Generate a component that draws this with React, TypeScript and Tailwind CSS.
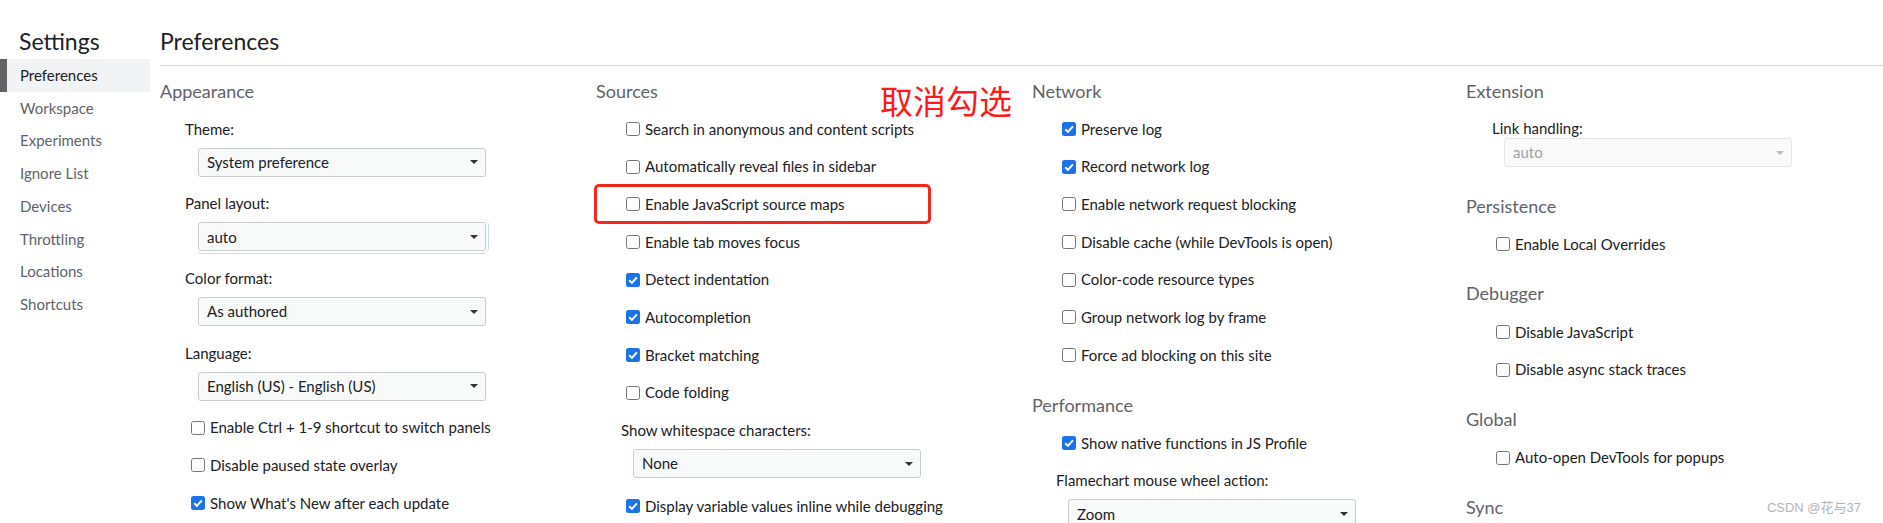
import React from "react";

const FONT = "font-['Segoe_UI',Lato,'Noto_Sans',sans-serif]";

const Box = ({ checked }: { checked?: boolean }) =>
  checked ? (
    <span className="w-[14px] h-[14px] rounded-[2.5px] bg-[#1a73e8] flex items-center justify-center shrink-0">
      <svg width="14" height="14" viewBox="0 0 14 14">
        <path d="M3.2 7.3 L5.9 9.9 L10.9 4.3" fill="none" stroke="#fff" strokeWidth="2" />
      </svg>
    </span>
  ) : (
    <span className="w-[14px] h-[14px] rounded-[2.5px] border border-[#767676] bg-white shrink-0" />
  );

const Row = ({
  label,
  checked,
  pad = "pl-[30px]",
  extra = "",
  children,
}: {
  label: string;
  checked?: boolean;
  pad?: string;
  extra?: string;
  children?: React.ReactNode;
}) => (
  <div className={`relative h-[37.7px] shrink-0 flex items-center gap-[5px] ${pad} ${extra}`}>
    <Box checked={checked} />
    <span className="text-[15px] text-[#202124] whitespace-nowrap">{label}</span>
    {children}
  </div>
);

const Header = ({ text, extra = "" }: { text: string; extra?: string }) => (
  <div className={`h-[38px] shrink-0 flex items-center text-[18px] text-[#5f6368] ${extra}`}>{text}</div>
);

const Label = ({ text, pad = "pl-[25px]", extra = "" }: { text: string; pad?: string; extra?: string }) => (
  <div className={`h-[37.7px] shrink-0 flex items-center text-[15px] text-[#202124] whitespace-nowrap ${pad} ${extra}`}>
    {text}
  </div>
);

const Select = ({
  value,
  indent = "ml-[37px]",
  disabled,
  focused,
}: {
  value: string;
  indent?: string;
  disabled?: boolean;
  focused?: boolean;
}) => (
  <div
    className={`h-[29px] w-[288px] shrink-0 ${indent} rounded-[3px] border flex items-center justify-between pl-[8px] pr-[7px] text-[15px] ${
      disabled
        ? "border-[#e3e5e8] bg-[#fafafa] text-[#a0a4a8]"
        : "border-[#c9cccf] bg-[#f8f9f9] text-[#202124]"
    } ${
      focused
        ? "shadow-[2px_0_0_0_#fff,0_2px_0_0_#fff,3px_0_0_0_#c4dbf8,0_3px_0_0_#c4dbf8]"
        : ""
    }`}
  >
    <span>{value}</span>
    <svg width="8" height="4" viewBox="0 0 8 4">
      <path d="M0 0 H8 L4 4 Z" fill={disabled ? "#b8bbbf" : "#333"} />
    </svg>
  </div>
);

const sideItems = [
  "Preferences",
  "Workspace",
  "Experiments",
  "Ignore List",
  "Devices",
  "Throttling",
  "Locations",
  "Shortcuts",
];

export default function App() {
  return (
    <div className={`relative w-[1883px] h-[523px] overflow-hidden bg-white flex ${FONT}`}>
      <div className="w-[150px] shrink-0">
        <div className="h-[59px] pl-[19px] pt-[25px] text-[23px] leading-[32px] text-[#202124]">Settings</div>
        {sideItems.map((s, i) =>
          i === 0 ? (
            <div
              key={s}
              className="h-[32.7px] flex items-center border-l-[7px] border-[#626262] bg-[#f1f3f4] pl-[13px] text-[15px] text-[#202124]"
            >
              {s}
            </div>
          ) : (
            <div key={s} className="h-[32.7px] flex items-center pl-[20px] text-[15px] text-[#5f6368]">
              {s}
            </div>
          )
        )}
      </div>

      <div className="ml-[10px] flex-1 flex flex-col">
        <div className="h-[66px] shrink-0 border-b border-[#d6d7d9] pt-[25px] text-[23px] leading-[32px] text-[#202124]">
          Preferences
        </div>

        <div className="flex shrink-0">
          {/* Appearance */}
          <div className="w-[436px] shrink-0 pt-[6px] flex flex-col">
            <Header text="Appearance" />
            <Label text="Theme:" />
            <Select value="System preference" indent="ml-[38px]" />
            <Label text="Panel layout:" extra="mt-[8px]" />
            <Select value="auto" indent="ml-[38px]" focused />
            <Label text="Color format:" extra="mt-[8px]" />
            <Select value="As authored" indent="ml-[38px]" />
            <Label text="Language:" extra="mt-[8px]" />
            <Select value="English (US) - English (US)" indent="ml-[38px]" />
            <Row label="Enable Ctrl + 1-9 shortcut to switch panels" pad="pl-[31px]" extra="mt-[8px]" />
            <Row label="Disable paused state overlay" pad="pl-[31px]" />
            <Row label="Show What's New after each update" pad="pl-[31px]" checked />
          </div>

          {/* Sources */}
          <div className="relative w-[436px] shrink-0 pt-[6px] flex flex-col">
            <Header text="Sources" />
            <Row label="Search in anonymous and content scripts" />
            <Row label="Automatically reveal files in sidebar" />
            <Row label="Enable JavaScript source maps">
              <div className="absolute left-[-2px] top-[-1px] w-[337px] h-[40px] border-[3px] border-[#f2281e] rounded-[5px]" />
            </Row>
            <Row label="Enable tab moves focus" />
            <Row label="Detect indentation" checked />
            <Row label="Autocompletion" checked />
            <Row label="Bracket matching" checked />
            <Row label="Code folding" />
            <Label text="Show whitespace characters:" />
            <Select value="None" />
            <Row label="Display variable values inline while debugging" checked extra="mt-[9px]" />
            <div className="absolute left-[284px] top-[16px] text-[33px] leading-[36px] text-[#ff1a1a] font-['Noto_Sans_CJK_SC',sans-serif]">
              取消勾选
            </div>
          </div>

          {/* Network */}
          <div className="w-[434px] shrink-0 pt-[6px] flex flex-col">
            <Header text="Network" />
            <Row label="Preserve log" checked />
            <Row label="Record network log" checked />
            <Row label="Enable network request blocking" />
            <Row label="Disable cache (while DevTools is open)" />
            <Row label="Color-code resource types" />
            <Row label="Group network log by frame" />
            <Row label="Force ad blocking on this site" />
            <Header text="Performance" extra="mt-[12.3px]" />
            <Row label="Show native functions in JS Profile" checked />
            <Label text="Flamechart mouse wheel action:" pad="pl-[24px]" />
            <Select value="Zoom" indent="ml-[36px]" />
          </div>

          {/* Extension */}
          <div className="flex-1 pt-[6px] flex flex-col">
            <Header text="Extension" />
            <div className="h-[28px] shrink-0 flex items-end pl-[26px] text-[15px] leading-[20px] text-[#202124]">
              Link handling:
            </div>
            <Select value="auto" indent="ml-[38px]" disabled />
            <Header text="Persistence" extra="mt-[20px]" />
            <Row label="Enable Local Overrides" />
            <Header text="Debugger" extra="mt-[12.3px]" />
            <Row label="Disable JavaScript" />
            <Row label="Disable async stack traces" />
            <Header text="Global" extra="mt-[12.3px]" />
            <Row label="Auto-open DevTools for popups" />
            <Header text="Sync" extra="mt-[12.3px]" />
          </div>
        </div>
      </div>

      <div className="absolute right-[22px] top-[498px] text-[13px] leading-[20px] text-[#b4b4b4] font-['Liberation_Sans','Noto_Sans_CJK_SC',sans-serif]">
        CSDN @花与37
      </div>
    </div>
  );
}
